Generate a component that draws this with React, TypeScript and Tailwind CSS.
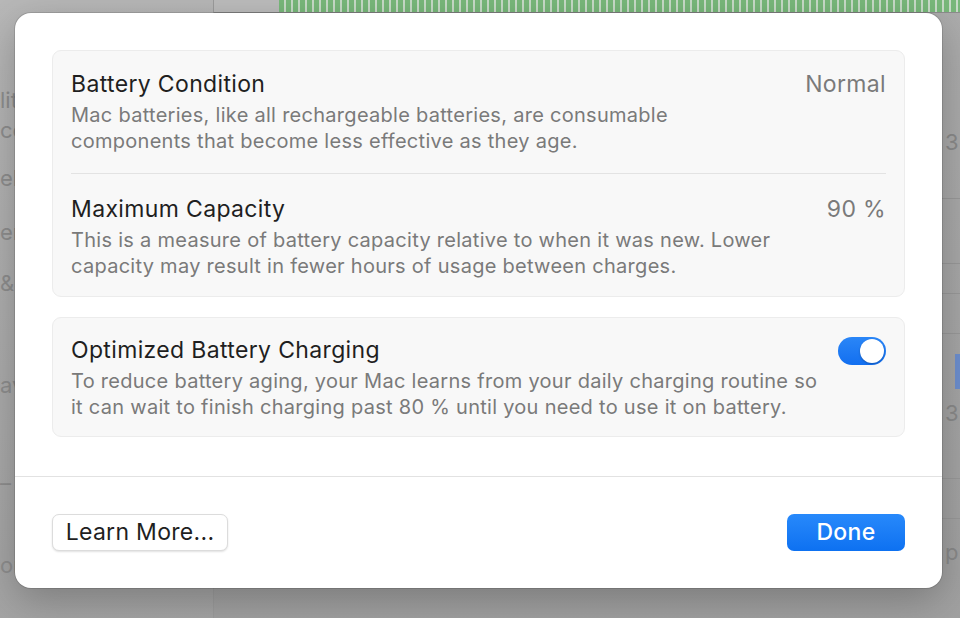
import React from 'react'

type RowProps = {
  title: string,
  lines: string[],
  value?: string,
  toggle?: boolean,
}

function Toggle() {
  return (
    <div className="w-[48px] h-[28px] rounded-full bg-gradient-to-b from-[#2a86f7] to-[#126ff0] p-[2px] flex justify-end shrink-0 mt-[1px]">
      <div className="w-[24px] h-[24px] rounded-full bg-white shadow-[0_1px_2px_rgba(0,0,0,0.25)]" />
    </div>
  )
}

function Row(props: RowProps) {
  const { title, lines, value, toggle } = props;

  return (
    <div className="flex items-start justify-between gap-4">
      <div className="flex flex-col gap-[4px]">
        <div className="text-[23px] leading-[28px] tracking-[0.35px] text-[#1f1f1f]">{title}</div>
        <div className="text-[20px] leading-[26px] tracking-[0.28px] text-[#7a7a7a]">
          {lines.map((l) => <div key={l}>{l}</div>)}
        </div>
      </div>
      {value && <div className="text-[23px] leading-[28px] tracking-[0.35px] text-[#7a7a7a]">{value}</div>}
      {toggle && <Toggle />}
    </div>
  )
}

// faded sidebar words peeking out from under the sheet
const sideWords = [
  { w: 'lit', cls: 'mt-[86px]' },
  { w: 'cc', cls: 'mt-[2px]' },
  { w: 'ell', cls: 'mt-[20px]' },
  { w: 'er', cls: 'mt-[26px]' },
  { w: '&', cls: 'mt-[23px]' },
  { w: 'av', cls: 'mt-[74px]' },
  { w: '–', cls: 'mt-[70px]' },
  { w: 'or', cls: 'mt-[54px]' },
];

function Backdrop() {
  return (
    <div className="absolute inset-0 flex">
      <div className="w-[214px] h-full bg-gradient-to-b from-[#b8b8b8] to-[#a4a4a4] border-r border-[#9c9c9c] flex flex-col text-[22px] leading-[28px] text-[#8e8e8e]">
        {sideWords.map((s, i) => <div key={i} className={`h-[28px] ${s.cls}`}>{s.w}</div>)}
      </div>
      <div className="flex-1 flex flex-col bg-gradient-to-b from-[#adadad] to-[#a1a1a1]">
        <div className="h-[13px] flex border-b border-[#8d8d8d]">
          <div className="w-[65px] bg-[#bdbdbd]" />
          <div className="flex-1 bg-[repeating-linear-gradient(90deg,#79b97b_0px,#79b97b_5px,#c9dcc9_5px,#c9dcc9_7px)]" />
        </div>
        <div className="flex-1 flex justify-end">
          <div className="w-[18px] flex flex-col text-[22px] text-[#8a8a8a] leading-[24px]">
            <div className="h-[117px]" />
            <div className="h-[24px] pl-[3px]">3</div>
            <div className="h-[45px] border-b border-[#999]" />
            <div className="h-[65px] border-b border-[#999]" />
            <div className="h-[30px] border-b border-[#999]" />
            <div className="h-[40px] border-b border-[#999]" />
            <div className="h-[20px]" />
            <div className="h-[35px] flex justify-end"><div className="w-[5px] h-full bg-[#6d8fcf]" /></div>
            <div className="h-[12px]" />
            <div className="h-[24px] pl-[3px]">3</div>
            <div className="h-[54px] border-b border-[#999]" />
            <div className="h-[40px] border-b border-[#999]" />
            <div className="h-[21px]" />
            <div className="h-[24px] pl-[3px] overflow-hidden">p</div>
          </div>
        </div>
      </div>
    </div>
  )
}

function App() {
  return (
    <div className="relative w-[960px] h-[618px] overflow-hidden bg-[#a5a5a5] font-['Inter','Noto_Sans',sans-serif]">
      <Backdrop />
      <div className="absolute left-[15px] top-[13px] w-[927px] h-[575px] bg-white rounded-[16px] shadow-[0_0_0_1px_rgba(0,0,0,0.12),0_12px_40px_rgba(0,0,0,0.25)] flex flex-col">
        <div className="px-[37px] pt-[37px] pb-[39px] flex flex-col gap-[20px]">
          <div className="bg-[#f8f8f8] border border-[#ececec] rounded-[9px] px-[18px] pt-[19px] pb-[17px] flex flex-col">
            <Row
              title="Battery Condition"
              value="Normal"
              lines={[
                'Mac batteries, like all rechargeable batteries, are consumable',
                'components that become less effective as they age.',
              ]}
            />
            <div className="h-px bg-[#e3e3e3] mt-[19px] mb-[21px]" />
            <Row
              title="Maximum Capacity"
              value="90 %"
              lines={[
                'This is a measure of battery capacity relative to when it was new. Lower',
                'capacity may result in fewer hours of usage between charges.',
              ]}
            />
          </div>
          <div className="bg-[#f8f8f8] border border-[#ececec] rounded-[9px] px-[18px] pt-[18px] pb-[16px]">
            <Row
              title="Optimized Battery Charging"
              toggle
              lines={[
                'To reduce battery aging, your Mac learns from your daily charging routine so',
                'it can wait to finish charging past 80 % until you need to use it on battery.',
              ]}
            />
          </div>
        </div>
        <div className="h-px bg-[#e2e2e2]" />
        <div className="flex-1 flex items-center justify-between px-[37px] pb-[1px]">
          <button className="h-[37px] w-[176px] rounded-[7px] bg-white border border-[#dcdcdc] shadow-[0_1px_2px_rgba(0,0,0,0.12)] text-[23px] tracking-[0.3px] text-[#1f1f1f]">
            Learn More...
          </button>
          <button className="h-[37px] w-[118px] rounded-[7px] bg-gradient-to-b from-[#2789fb] to-[#0d71f1] text-[23px] tracking-[0.3px] text-white font-medium">
            Done
          </button>
        </div>
      </div>
    </div>
  )
}

export default App
